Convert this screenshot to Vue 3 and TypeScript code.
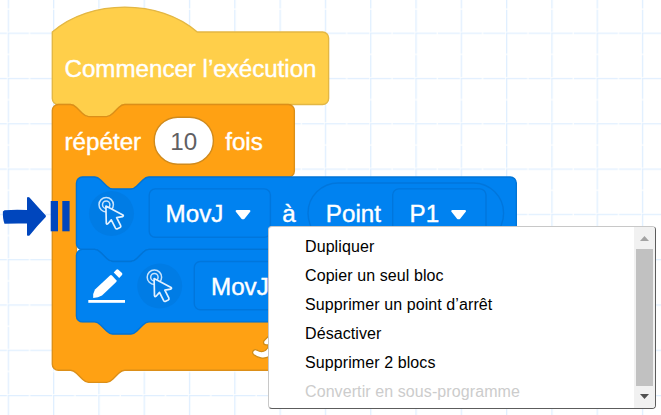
<script setup lang="ts">
interface MenuItem {
  label: string
  disabled?: boolean
}

const menuItems: MenuItem[] = [
  { label: 'Dupliquer' },
  { label: 'Copier un seul bloc' },
  { label: 'Supprimer un point d’arrêt' },
  { label: 'Désactiver' },
  { label: 'Supprimer 2 blocs' },
  { label: 'Convertir en sous-programme', disabled: true },
]

// Connector shapes, in block units
const notch = 'c2 0 3 1 4 2l4 4c1 1 2 2 4 2h12c2 0 3 -1 4 -2l4 -4c1 -1 2 -2 4 -2'
const notchBack = 'c-2 0 -3 1 -4 2l-4 4c-1 1 -2 2 -4 2h-12c-2 0 -3 -1 -4 -2l-4 -4c-1 -1 -2 -2 -4 -2'

const hatPath = `M0 0c25 -22 71 -22 96 0H179a4 4 0 0 1 4 4V44a4 4 0 0 1 -4 4H48${notchBack}H4a4 4 0 0 1 -4 -4z`
const loopPath =
  `M0 52a4 4 0 0 1 4 -4H12${notch}H156.3a4 4 0 0 1 4 4V92a4 4 0 0 1 -4 4H64${notchBack}H20a4 4 0 0 0 -4 4` +
  `V188a4 4 0 0 0 4 4H28${notch}H156.3a4 4 0 0 1 4 4V220a4 4 0 0 1 -4 4H48${notchBack}H4a4 4 0 0 1 -4 -4z`

function stackPath(top: number, right: number): string {
  return `M16 ${top + 4}a4 4 0 0 1 4 -4H28${notch}H${right - 4}a4 4 0 0 1 4 4V${top + 44}a4 4 0 0 1 -4 4H64${notchBack}H20a4 4 0 0 1 -4 -4z`
}

const pointers = [
  { x: 111.5, y: 213.5 },
  { x: 159.7, y: 286 },
]
const carets = [
  { x: 243, y: 214.6 },
  { x: 458.6, y: 214.6 },
]
const repeatPath =
  'M23.3 11c-.3.6-.9 1-1.5 1h-1.6c-.1 1.3-.5 2.5-1.1 3.6-.9 1.7-2.3 3.2-4.1 4.1-1.7.9-3.6 1.2-5.5.9-1.8-.3-3.5-1.1-4.9-2.3-.7-.7-.7-1.9 0-2.6.6-.6 1.6-.7 2.3-.2H7c.9.6 1.9.9 2.9.9s1.9-.3 2.7-.9c1.1-.8 1.8-2.1 1.8-3.5h-1.5c-.9 0-1.7-.7-1.7-1.7 0-.4.2-.9.5-1.2l4.4-4.4c.7-.6 1.7-.6 2.4 0L23 9.2c.5.5.6 1.2.3 1.8z'
</script>

<template>
  <main class="workspace">
    <svg class="canvas" width="661" height="415" viewBox="0 0 661 415">
      <defs>
        <pattern id="grid" x="7.7" y="32.6" width="45.3" height="45.3" patternUnits="userSpaceOnUse">
          <path class="grid-line" d="M1 0V21.8M1 23.2V45.3M0 1H22M23.2 1H45.3" transform="translate(-.7 -.7)" />
        </pattern>
      </defs>
      <rect width="661" height="415" fill="url(#grid)" />

      <g transform="translate(52.3 32) scale(1.51)">
        <path class="block hat" :d="hatPath" />
        <path class="block loop" :d="loopPath" />
        <path class="block motion" :d="stackPath(96, 307.3)" />
        <path class="block motion" :d="stackPath(144, 340)" />
      </g>

      <text class="label" x="64.5" y="77" textLength="252">Commencer l’exécution</text>
      <text class="label" x="64.5" y="150">répéter</text>
      <rect class="number" x="154.2" y="117.2" width="59.2" height="47" rx="23.5" />
      <text class="label value" x="183.7" y="150" text-anchor="middle">10</text>
      <text class="label" x="225.2" y="150">fois</text>

      <rect class="field" x="149.2" y="188.9" width="121.2" height="48.3" rx="6" />
      <text class="label" x="165.6" y="221.7">MovJ</text>
      <text class="label" x="282.2" y="222">à</text>
      <rect class="field" x="308" y="183" width="195.6" height="60.4" rx="30.2" />
      <text class="label" x="325.8" y="222">Point</text>
      <rect class="field" x="392.7" y="188.9" width="93.3" height="48.3" rx="6" />
      <text class="label" x="409.6" y="221.7">P1</text>
      <path
        v-for="(c, i) in carets"
        :key="i"
        class="caret"
        d="M-6.2 -3.5H6.2L1 3Q0 4 -1 3z"
        :transform="`translate(${c.x} ${c.y})`"
      />

      <rect class="field" x="194.3" y="261.5" width="121.2" height="48.3" rx="6" />
      <text class="label" x="211" y="295">MovJ</text>

      <g v-for="(p, i) in pointers" :key="`p${i}`" :transform="`translate(${p.x} ${p.y})`">
        <circle class="halo" r="22.5" />
        <circle class="ring" cx="-5.3" cy="-8.8" r="7.2" />
        <circle class="ring" cx="-5.3" cy="-8.8" r="3.7" />
        <path class="pointer" d="M-5.6 -7.4L-5.2 9.9Q-4.8 11.4 -3.6 10.2L-.2 6.4L4 14.6Q4.7 15.8 6 15.2L8.5 14Q9.8 13.2 9.1 11.8L5.1 4.2L10.9 3.2Q12.5 2.4 11.4 1.4z" />
      </g>

      <g class="pencil">
        <path d="M93.2 298Q92.6 293.5 95 289.5L110 275.4Q111 274.6 112 275.5L116.3 280.2Q117 281.2 116.2 282.1L102 295.6Q98.2 297.9 93.2 298z" />
        <path d="M113.7 272.6L116.3 269.7Q117.3 268.7 118.4 269.7L122 273.1Q122.8 274.2 122 275L119.2 277.9z" />
        <rect x="88.3" y="300" width="36.7" height="2.8" />
      </g>

      <g transform="translate(246.6 326.8) scale(1.51)">
        <path class="repeat" :d="repeatPath" />
      </g>

      <g class="breakpoint">
        <path d="M4.5 210.2Q15 209.5 27 210V197.5Q28 196.5 29.5 197.5Q37 206 45.8 215.5Q46.2 216.5 45.5 217.3Q37 226 29.5 235.5Q28 236.2 27 235.3V223.5Q15 223.2 4.5 223.7Q2.6 219 2.9 211.5z" />
        <rect x="50.7" y="201" width="7.3" height="30.3" />
        <rect x="62.3" y="201" width="7.3" height="30.3" />
      </g>
    </svg>

    <div class="context-menu">
      <ul class="items">
        <li v-for="item in menuItems" :key="item.label" class="item" :class="{ disabled: item.disabled }">
          {{ item.label }}
        </li>
      </ul>
      <div class="scrollbar">
        <svg class="arrow" width="9" height="5" viewBox="0 0 9 5"><path d="M0 5L4.5 0L9 5z" fill="#a3a3a3" /></svg>
        <div class="thumb"></div>
        <svg class="arrow" width="9" height="5" viewBox="0 0 9 5"><path d="M0 0L4.5 5L9 0z" fill="#505050" /></svg>
      </div>
    </div>
  </main>
</template>

<style>
body {
  background: #fff;
  overflow: hidden;
}
</style>

<style scoped>
.workspace {
  position: relative;
  width: 661px;
  height: 415px;
  overflow: hidden;
  font-family: "Liberation Sans", Arial, sans-serif;
}
.canvas {
  display: block;
}
.grid-line {
  stroke: #e0efff;
  stroke-width: 2;
}
.block {
  stroke-width: 0.9;
}
.hat {
  fill: #ffcf4a;
  stroke: #e3b744;
}
.loop {
  fill: #ffa113;
  stroke: #dc8f18;
}
.motion {
  fill: #0082f0;
  stroke: #0074d6;
}
.label {
  fill: #fff;
  font-size: 24.2px;
  stroke: #fff;
  stroke-width: 0.4;
}
.value {
  fill: #5f6063;
  stroke: none;
}
.number {
  fill: #fff;
  stroke: #d08a1c;
  stroke-width: 1.4;
}
.field {
  fill: none;
  stroke: #0076dc;
  stroke-width: 1.4;
}
.caret {
  fill: #fff;
  stroke: #fff;
  stroke-width: 2.4;
  stroke-linejoin: round;
}
.halo {
  fill: #007ce5;
}
.ring {
  fill: none;
  stroke: #c8e3fc;
  stroke-width: 1.5;
}
.pointer {
  fill: #007ce5;
  stroke: #e2f1ff;
  stroke-width: 1.7;
  stroke-linejoin: round;
}
.pencil {
  fill: #fff;
}
.repeat {
  fill: #fff;
  stroke: #cf8b17;
  stroke-width: 0.8;
}
.breakpoint {
  fill: #0046bd;
}
.context-menu {
  position: absolute;
  left: 268px;
  top: 226px;
  display: flex;
  justify-content: space-between;
  box-sizing: border-box;
  width: 388px;
  height: 183px;
  overflow: hidden;
  background: #fff;
  border: 1px solid;
  border-color: #c8c8c8 #5c5c5c #5c5c5c #c8c8c8;
  border-radius: 4px;
}
.items {
  margin: 0;
  padding: 5px 0 0 36px;
  list-style: none;
}
.item {
  height: 29px;
  font-size: 16px;
  line-height: 29px;
  letter-spacing: 0.09px;
  white-space: nowrap;
  color: #000;
}
.item.disabled {
  color: #ccc;
}
.scrollbar {
  display: flex;
  flex-direction: column;
  align-items: center;
  justify-content: space-between;
  box-sizing: border-box;
  width: 21px;
  padding: 9px 0;
  background: #f1f1f1;
}
.arrow {
  display: block;
}
.thumb {
  width: 17px;
  height: 137px;
  background: #c1c1c1;
}
</style>
